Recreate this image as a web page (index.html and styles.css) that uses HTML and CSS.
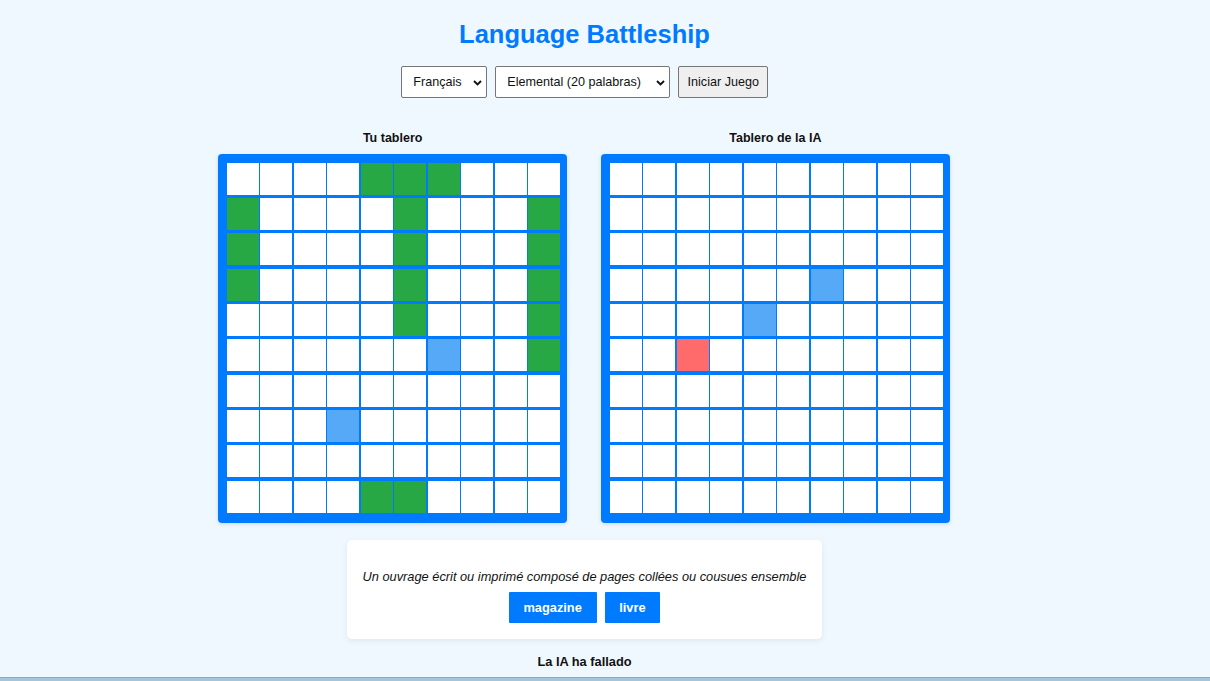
FILE: index.html
```html
<!DOCTYPE html>
<html lang="es">
<head>
<meta charset="utf-8">
<title>Language Battleship</title>
<link rel="stylesheet" href="styles.css">
</head>
<body>
<div class="app">
  <h1 class="title">Language Battleship</h1>
  <div class="controls">
    <span class="select-wrap w-lang">
      <select class="select"><option>Français</option></select>
      <svg class="chev" width="9" height="6" viewBox="0 0 9 6"><polyline points="1,1 4.5,4.5 8,1" fill="none" stroke="#111" stroke-width="1.9"/></svg>
    </span>
    <span class="select-wrap w-level">
      <select class="select"><option>Elemental (20 palabras)</option></select>
      <svg class="chev" width="9" height="6" viewBox="0 0 9 6"><polyline points="1,1 4.5,4.5 8,1" fill="none" stroke="#111" stroke-width="1.9"/></svg>
    </span>
    <button class="start">Iniciar Juego</button>
  </div>

  <div class="boards">
    <section class="board-col">
      <h3 class="board-label">Tu tablero</h3>
      <div class="board">
        <div class="c"></div><div class="c"></div><div class="c"></div><div class="c"></div><div class="c s"></div><div class="c s"></div><div class="c s"></div><div class="c"></div><div class="c"></div><div class="c"></div>
        <div class="c s"></div><div class="c"></div><div class="c"></div><div class="c"></div><div class="c"></div><div class="c s"></div><div class="c"></div><div class="c"></div><div class="c"></div><div class="c s"></div>
        <div class="c s"></div><div class="c"></div><div class="c"></div><div class="c"></div><div class="c"></div><div class="c s"></div><div class="c"></div><div class="c"></div><div class="c"></div><div class="c s"></div>
        <div class="c s"></div><div class="c"></div><div class="c"></div><div class="c"></div><div class="c"></div><div class="c s"></div><div class="c"></div><div class="c"></div><div class="c"></div><div class="c s"></div>
        <div class="c"></div><div class="c"></div><div class="c"></div><div class="c"></div><div class="c"></div><div class="c s"></div><div class="c"></div><div class="c"></div><div class="c"></div><div class="c s"></div>
        <div class="c"></div><div class="c"></div><div class="c"></div><div class="c"></div><div class="c"></div><div class="c"></div><div class="c m"></div><div class="c"></div><div class="c"></div><div class="c s"></div>
        <div class="c"></div><div class="c"></div><div class="c"></div><div class="c"></div><div class="c"></div><div class="c"></div><div class="c"></div><div class="c"></div><div class="c"></div><div class="c"></div>
        <div class="c"></div><div class="c"></div><div class="c"></div><div class="c m"></div><div class="c"></div><div class="c"></div><div class="c"></div><div class="c"></div><div class="c"></div><div class="c"></div>
        <div class="c"></div><div class="c"></div><div class="c"></div><div class="c"></div><div class="c"></div><div class="c"></div><div class="c"></div><div class="c"></div><div class="c"></div><div class="c"></div>
        <div class="c"></div><div class="c"></div><div class="c"></div><div class="c"></div><div class="c s"></div><div class="c s"></div><div class="c"></div><div class="c"></div><div class="c"></div><div class="c"></div>
      </div>
    </section>
    <section class="board-col">
      <h3 class="board-label">Tablero de la IA</h3>
      <div class="board">
        <div class="c"></div><div class="c"></div><div class="c"></div><div class="c"></div><div class="c"></div><div class="c"></div><div class="c"></div><div class="c"></div><div class="c"></div><div class="c"></div>
        <div class="c"></div><div class="c"></div><div class="c"></div><div class="c"></div><div class="c"></div><div class="c"></div><div class="c"></div><div class="c"></div><div class="c"></div><div class="c"></div>
        <div class="c"></div><div class="c"></div><div class="c"></div><div class="c"></div><div class="c"></div><div class="c"></div><div class="c"></div><div class="c"></div><div class="c"></div><div class="c"></div>
        <div class="c"></div><div class="c"></div><div class="c"></div><div class="c"></div><div class="c"></div><div class="c"></div><div class="c m"></div><div class="c"></div><div class="c"></div><div class="c"></div>
        <div class="c"></div><div class="c"></div><div class="c"></div><div class="c"></div><div class="c m"></div><div class="c"></div><div class="c"></div><div class="c"></div><div class="c"></div><div class="c"></div>
        <div class="c"></div><div class="c"></div><div class="c h"></div><div class="c"></div><div class="c"></div><div class="c"></div><div class="c"></div><div class="c"></div><div class="c"></div><div class="c"></div>
        <div class="c"></div><div class="c"></div><div class="c"></div><div class="c"></div><div class="c"></div><div class="c"></div><div class="c"></div><div class="c"></div><div class="c"></div><div class="c"></div>
        <div class="c"></div><div class="c"></div><div class="c"></div><div class="c"></div><div class="c"></div><div class="c"></div><div class="c"></div><div class="c"></div><div class="c"></div><div class="c"></div>
        <div class="c"></div><div class="c"></div><div class="c"></div><div class="c"></div><div class="c"></div><div class="c"></div><div class="c"></div><div class="c"></div><div class="c"></div><div class="c"></div>
        <div class="c"></div><div class="c"></div><div class="c"></div><div class="c"></div><div class="c"></div><div class="c"></div><div class="c"></div><div class="c"></div><div class="c"></div><div class="c"></div>
      </div>
    </section>
  </div>

  <div class="question-card">
    <p class="definition">Un ouvrage écrit ou imprimé composé de pages collées ou cousues ensemble</p>
    <div class="answers">
      <button class="answer">magazine</button>
      <button class="answer">livre</button>
    </div>
  </div>

  <p class="status">La IA ha fallado</p>
  <div class="bottom-bar"></div>
</div>
</body>
</html>
```
FILE: styles.css
```css
html, body {
  margin: 0;
  padding: 0;
  background: #f0f8ff;
  font-family: "Liberation Sans", Arial, sans-serif;
  color: #111;
  overflow: hidden;
}

.app {
  width: 1169px;
  display: flex;
  flex-direction: column;
  align-items: center;
}

.title {
  margin: 19px 0 0;
  font-size: 25.5px;
  line-height: 30px;
  font-weight: bold;
  color: #007bff;
}

.controls {
  margin-top: 17px;
  display: flex;
  gap: 8px;
  height: 32px;
}

.select-wrap {
  position: relative;
  display: block;
  height: 32px;
}

.w-lang { width: 86px; }
.w-level { width: 175.5px; }

.select {
  appearance: none;
  -webkit-appearance: none;
  width: 100%;
  height: 32px;
  box-sizing: border-box;
  margin: 0;
  padding: 0 0 0 11.7px;
  border: 1px solid #767676;
  border-radius: 2px;
  background: #fff;
  font-family: "Liberation Sans", Arial, sans-serif;
  font-size: 12.6px;
  color: #111;
}

.chev {
  position: absolute;
  right: 5px;
  top: 13.5px;
  pointer-events: none;
}

.start {
  height: 32px;
  box-sizing: border-box;
  margin: 0;
  padding: 0 8.4px;
  border: 1px solid #767676;
  border-radius: 2px;
  background: #efefef;
  font-family: "Liberation Sans", Arial, sans-serif;
  font-size: 12.6px;
  color: #111;
}

.boards {
  margin-top: 32.5px;
  display: flex;
  gap: 33.7px;
  padding-right: 1px;
}

.board-col {
  display: flex;
  flex-direction: column;
  align-items: center;
}

.board-label {
  margin: 0;
  font-size: 12.5px;
  line-height: 15px;
  font-weight: bold;
  color: #111;
}

.board {
  margin-top: 8.5px;
  width: 349px;
  height: 369px;
  box-sizing: border-box;
  padding: 8.7px 6.8px 10.15px 8.7px;
  background: #007bff;
  border-radius: 4px;
  box-shadow: 0 1px 4px rgba(0, 40, 90, 0.15);
  display: grid;
  grid-template-columns: repeat(10, 32px);
  grid-auto-rows: 32px;
  column-gap: 1.5px;
  row-gap: 3.35px;
}

.c { background: #fff; }
.c.s { background: #28a745; }
.c.m { background: #56a9f6; }
.c.h { background: #ff6b6b; }

.question-card {
  margin-top: 17px;
  width: 475px;
  box-sizing: border-box;
  padding: 16px;
  background: #fff;
  border-radius: 5px;
  box-shadow: 0 2px 6px rgba(0, 30, 80, 0.08);
  display: flex;
  flex-direction: column;
  align-items: center;
}

.definition {
  margin: 12.5px 0 0;
  font-size: 12.8px;
  line-height: 15px;
  font-style: italic;
  color: #111;
  white-space: nowrap;
}

.answers {
  margin-top: 8.5px;
  display: flex;
  gap: 8px;
}

.answer {
  height: 30.7px;
  margin: 0;
  padding: 0 14.7px;
  border: none;
  border-radius: 1px;
  background: #007bff;
  color: #fff;
  font-family: "Liberation Sans", Arial, sans-serif;
  font-size: 12.8px;
  font-weight: bold;
}

.status {
  margin: 15.8px 0 0;
  font-size: 12.8px;
  line-height: 15px;
  font-weight: bold;
  color: #111;
}

.bottom-bar {
  margin-top: 7.2px;
  width: 1210px;
  align-self: flex-start;
  height: 20px;
  border-top: 1px solid #88aac2;
  background: #a4c6dd;
}
```
